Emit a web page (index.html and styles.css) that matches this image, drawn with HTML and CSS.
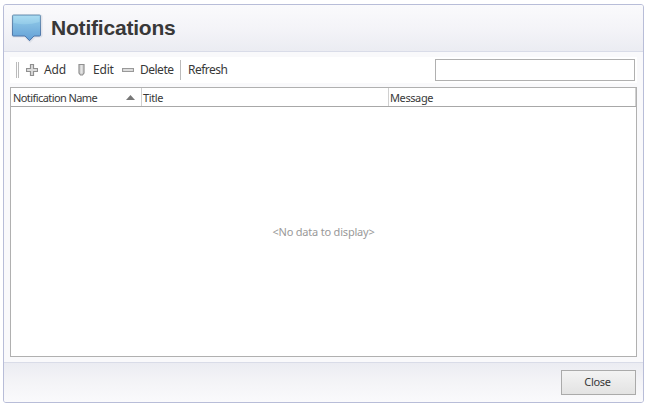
FILE: index.html
```html
<!DOCTYPE html>
<html lang="en">
<head>
<meta charset="utf-8">
<title>Notifications</title>
<link rel="stylesheet" href="styles.css">
</head>
<body>
<main class="dialog">
  <header class="dialog-header">
    <svg class="logo" width="32" height="30" viewBox="0 0 32 30" aria-hidden="true">
      <defs>
        <linearGradient id="fill" x1="0" y1="0" x2="0" y2="1"><stop offset="0" stop-color="#8fcbe9"/><stop offset=".4" stop-color="#82bce2"/><stop offset="1" stop-color="#629fd6"/></linearGradient>
        <linearGradient id="edge" x1="0" y1="0" x2="0" y2="1"><stop offset="0" stop-color="#7598b5"/><stop offset="1" stop-color="#456fa8"/></linearGradient>
        <linearGradient id="gloss" x1="0" y1="0" x2="0" y2="1"><stop offset="0" stop-color="#a9dbf1"/><stop offset="1" stop-color="#92cae8"/></linearGradient>
      </defs>
      <path d="M2.500 2.500h27q1 0 1 1v19q0 1-1 1h-5.500l-5 5-5-5h-11.500q-1 0-1-1v-19q0-1 1-1z" fill="none" stroke="#c9d0dc" stroke-width="2" opacity=".5"/>
      <path d="M2.500 2h26q1 0 1 1v19q0 1-1 1h-5.500l-4.500 4.700-4.500-4.700h-11.500q-1 0-1-1v-19q0-1 1-1z" fill="url(#fill)" stroke="url(#edge)"/>
      <path d="M2.500 3h26v6q-13 4-26 1z" fill="url(#gloss)"/>
    </svg>
    <h1>Notifications</h1>
  </header>
  <section class="content">
    <div class="toolbar">
      <span class="grip"></span>
      <button class="tool add"><svg width="12" height="12" viewBox="0 0 12 12"><path d="M4.500.5h3v4h4v3h-4v4h-3v-4h-4v-3h4z" fill="#ddd" stroke="#909090" stroke-width="1.200"/></svg><span>Add</span></button>
      <button class="tool edit"><svg width="7" height="12" viewBox="0 0 7 12"><path d="M1 .5h5v8.500l-1.500 2h-2l-1.500-2z" fill="#d6d6d6" stroke="#909090" stroke-width="1.200"/><path d="M3.500 1v8" stroke="#e5e5e5"/></svg><span>Edit</span></button>
      <button class="tool delete"><svg width="12" height="4" viewBox="0 0 12 4"><path d="M.5.5h11v3h-11z" fill="#ddd" stroke="#999" stroke-width="1.200"/></svg><span>Delete</span></button>
      <span class="separator"></span>
      <button class="tool refresh"><span>Refresh</span></button>
      <input class="search" type="text" aria-label="Search">
    </div>
    <div class="table">
      <div class="columns">
        <div class="column"><span class="name">Notification Name</span><svg width="9" height="5" viewBox="0 0 9 5"><path d="M4.500 0 9 5H0z" fill="#777"/></svg></div>
        <div class="column"><span>Title</span></div>
        <div class="column"><span class="message">Message</span></div>
      </div>
      <div class="empty"><span>&lt;No data to display&gt;</span></div>
    </div>
  </section>
  <footer class="dialog-footer"><button class="close">Close</button></footer>
</main>
</body>
</html>
```
FILE: styles.css
```css
* { box-sizing: border-box; }
body { margin: 0; background: #fff; color: #383838; font-family: "Noto Sans", sans-serif; }
button { border: 0; padding: 0; background: none; color: inherit; font: inherit; }
.dialog {
  width: 641px; height: 399px; margin: 4px 0 0 3px;
  border: 1px solid #b8bdd8; border-radius: 3px; overflow: hidden;
  display: flex; flex-direction: column; background: #f9f9fb;
}
.dialog-header {
  height: 47px; flex: none; display: flex; align-items: flex-start;
  padding: 8px 0 0 7px; border-bottom: 1px solid #d9dce8;
  background: linear-gradient(#fafafc, #f4f4f8 50%, #ebecf2);
}
.logo { flex: none; }
h1 { margin: 3px 0 0 8px; font: bold 21px/24px "Liberation Sans", sans-serif; letter-spacing: -.2px; color: #383838; }
.content { height: 310px; flex: none; padding: 5px 6px 0; }
.toolbar { height: 26px; display: flex; align-items: center; background: #fff; font-size: 12px; }
.grip { width: 3px; height: 16px; margin-left: 6px; border: solid #bbb; border-width: 0 1px; }
.tool { display: flex; align-items: center; height: 20px; line-height: 20px; white-space: nowrap; }
.tool svg { flex: none; }
.tool span { letter-spacing: -.2px; }
.add { width: 52px; margin-left: 7px; gap: 6px; }
.edit { width: 44px; gap: 8px; }
.delete { width: 58px; gap: 6px; }
.delete span, .refresh span { letter-spacing: -.5px; }
.separator { width: 1px; height: 20px; background: #bbb; margin-right: 7px; }
.search { width: 200px; height: 22px; margin: 0 2px 0 auto; border: 1px solid #b0b0b0; padding: 0 4px; background: #fff; outline: 0; }
.table { height: 270px; margin-top: 4px; border: 1px solid #b0b0b0; background: #fff; font-size: 11px; display: flex; flex-direction: column; }
.columns { height: 19px; flex: none; display: grid; grid-template-columns: 131px 247px 247px; border-bottom: 1px solid #a8a8a8; }
.column { display: flex; align-items: center; justify-content: space-between; padding: 2px 6px 0 2px; border-right: 1px solid #d0d0d0; line-height: 16px; white-space: nowrap; letter-spacing: -.4px; }
.name { letter-spacing: -.58px; }
.column svg { margin-top: -1px; }
.column:nth-child(n+2) { padding-left: 1px; }
.empty { flex: 1; display: grid; place-items: center; color: #999; letter-spacing: -.2px; }
.dialog-footer { flex: 1; display: flex; justify-content: flex-end; padding: 7px 7px 0 0; border-top: 1px solid #d9dce8; background: linear-gradient(#ebecf2, #f4f4f7 50%, #fafafc); }
.close { width: 75px; height: 25px; border: 1px solid #aaa; background: linear-gradient(#f3f3f3, #e3e3e3); font-size: 11px; line-height: 21px; letter-spacing: -.3px; padding: 0 2px 2px 0; }
```
